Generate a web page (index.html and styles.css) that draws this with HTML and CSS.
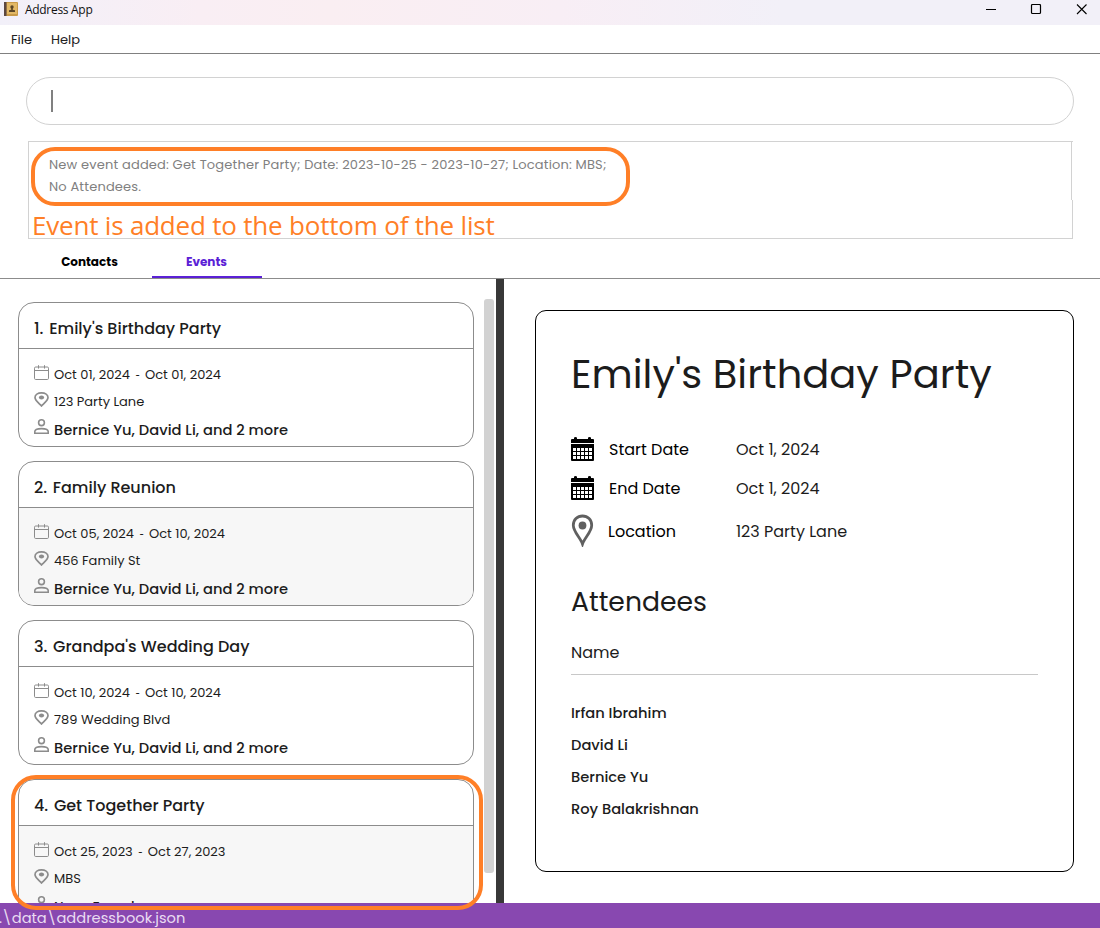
FILE: index.html
```html
<!DOCTYPE html>
<html lang="en">
<head>
<meta charset="utf-8">
<title>Address App</title>
<link rel="stylesheet" href="styles.css">
</head>
<body>
<svg class="defs" width="0" height="0" aria-hidden="true">
  <symbol id="cal" viewBox="0 0 15 15"><path d="M.5 3.2Q.5 2 1.7 2H13.3Q14.5 2 14.5 3.2V13.3Q14.5 14.5 13.3 14.5H1.7Q.5 14.5 .5 13.3ZM.5 5.5H14.5M4.5 .2V3.6M10.5 .2V3.6" fill="none" stroke="#8c8c8c"/></symbol>
  <symbol id="pin" viewBox="0 0 15 15"><path d="M7.5 14C5.5 11.8 1 8.800 1 5.600C1 2.700 3.900 .9 7.500 .9S14 2.700 14 5.600C14 8.800 9.500 11.800 7.500 14Z" fill="none" stroke="#8c8c8c" stroke-width="1.700"/><ellipse cx="7.500" cy="5.400" rx="2.600" ry="2" fill="#8c8c8c"/></symbol>
  <symbol id="person" viewBox="0 0 15 15"><g fill="none" stroke="#8c8c8c" stroke-width="1.600"><circle cx="7.500" cy="3.700" r="2.900"/><path d="M.8 14.200V12.600C.8 10.600 4 9.600 7.500 9.600S14.200 10.600 14.200 12.600V14.200Z"/></g></symbol>
  <symbol id="calsolid" viewBox="0 0 23 24"><path d="M0 3Q0 2 1 2H3V1Q3 0 4.500 0T6 1V2H17V1Q17 0 18.500 0T20 1V2H22Q23 2 23 3V6H0ZM0 7H23V23Q23 24 22 24H1Q0 24 0 23Z"/><path d="M2 11h3v3h-3zM6 11h3v3h-3zM10 11h3v3h-3zM14 11h3v3h-3zM18 11h3v3h-3zM2 15h3v3h-3zM6 15h3v3h-3zM10 15h3v3h-3zM14 15h3v3h-3zM18 15h3v3h-3zM2 19h3v3h-3zM6 19h3v3h-3zM10 19h3v3h-3zM14 19h3v3h-3zM18 19h3v3h-3z" fill="#fff"/></symbol>
</svg>
<div class="window">
  <header class="titlebar">
    <svg class="appicon" width="14" height="14" viewBox="0 0 14 14"><rect width="14" height="14" rx="1" fill="#c99a48"/><rect x="3" y="1" width="10" height="11" fill="#e2b866"/><rect width="2.500" height="14" fill="#5b4740"/><circle cx="8" cy="5" r="1.700" fill="#5a4526"/><path d="M7.200 6h1.600v1.700l2.200.6v1.700H5V8.300l2.200-.6z" fill="#5a4526"/></svg>
    <span class="apptitle">Address App</span>
    <svg class="controls" width="104" height="12" viewBox="0 0 104 12"><path d="M1 5.500H11" stroke="#000"/><rect x="46.500" y=".5" width="9" height="9" rx="1" fill="none" stroke="#000" stroke-width="1.200"/><path d="M92 .5L101.500 10M101.500 .5L92 10" stroke="#000" stroke-width="1.100"/></svg>
  </header>
  <nav class="menu"><span>File</span><span>Help</span></nav>
  <section class="top">
    <div class="command"><i class="caret"></i></div>
    <div class="result">
      <div class="message"><p>New event added: Get Together Party; Date: 2023-10-25 - 2023-10-27; Location: MBS;</p><p>No Attendees.</p></div>
      <p class="note">Event is added to the bottom of the list</p>
      <i class="edge"></i>
    </div>
  </section>
  <div class="tabs"><span class="tab">Contacts</span><span class="tab active">Events</span></div>
  <main class="main">
    <section class="list">
      <div class="cards">
        <article class="card"><h2><span class="num">1. </span>Emily's Birthday Party</h2><div class="body">
          <div class="row"><svg class="ic"><use href="#cal"/></svg><span>Oct 01, 2024<b class="dash">-</b>Oct 01, 2024</span></div>
          <div class="row"><svg class="ic"><use href="#pin"/></svg><span>123 Party Lane</span></div>
          <div class="row people"><svg class="ic"><use href="#person"/></svg><span>Bernice Yu, David Li, and 2 more</span></div></div></article>
        <article class="card alt"><h2><span class="num">2. </span>Family Reunion</h2><div class="body">
          <div class="row"><svg class="ic"><use href="#cal"/></svg><span>Oct 05, 2024<b class="dash">-</b>Oct 10, 2024</span></div>
          <div class="row"><svg class="ic"><use href="#pin"/></svg><span>456 Family St</span></div>
          <div class="row people"><svg class="ic"><use href="#person"/></svg><span>Bernice Yu, David Li, and 2 more</span></div></div></article>
        <article class="card"><h2><span class="num">3. </span>Grandpa's Wedding Day</h2><div class="body">
          <div class="row"><svg class="ic"><use href="#cal"/></svg><span>Oct 10, 2024<b class="dash">-</b>Oct 10, 2024</span></div>
          <div class="row"><svg class="ic"><use href="#pin"/></svg><span>789 Wedding Blvd</span></div>
          <div class="row people"><svg class="ic"><use href="#person"/></svg><span>Bernice Yu, David Li, and 2 more</span></div></div></article>
        <article class="card alt"><h2><span class="num">4. </span>Get Together Party</h2><div class="body">
          <div class="row"><svg class="ic"><use href="#cal"/></svg><span>Oct 25, 2023<b class="dash">-</b>Oct 27, 2023</span></div>
          <div class="row"><svg class="ic"><use href="#pin"/></svg><span>MBS</span></div>
          <div class="row people none"><svg class="ic"><use href="#person"/></svg><span>None Found</span></div></div></article>
      </div>
      <div class="scroll"></div>
    </section>
    <div class="divider"></div>
    <section class="detail">
      <div class="panel">
        <h1>Emily's Birthday Party</h1>
        <div class="facts">
          <svg class="big" width="23" height="24"><use href="#calsolid"/></svg><span class="key">Start Date</span><span>Oct 1, 2024</span>
          <svg class="big" width="23" height="24"><use href="#calsolid"/></svg><span class="key">End Date</span><span>Oct 1, 2024</span>
          <svg class="big" width="23" height="33" viewBox="0 0 23 33"><path d="M11.500 30C9.500 24 2.300 17.800 2.300 11.300C2.300 5.800 6.300 2 11.500 2S20.700 5.800 20.700 11.300C20.700 17.800 13.500 24 11.500 30Z" fill="none" stroke="#606060" stroke-width="2.800"/><circle cx="11.500" cy="11.500" r="3.900" fill="#606060"/></svg><span class="key place">Location</span><span>123 Party Lane</span>
        </div>
        <h3>Attendees</h3>
        <div class="colhead"><span>Name</span></div>
        <ul class="names"><li>Irfan Ibrahim</li><li>David Li</li><li>Bernice Yu</li><li>Roy Balakrishnan</li></ul>
      </div>
    </section>
  </main>
  <footer class="status">.\data\addressbook.json</footer>
  <div class="highlight"></div>
</div>
</body>
</html>
```
FILE: styles.css
```css
* { box-sizing: border-box; }
body, p, h1, h2, h3, ul { margin: 0; padding: 0; }
body { background: #fff; font-family: Poppins, Inter, sans-serif; color: #1c1c1c; }
.defs { position: absolute; }
.window { width: 1100px; height: 928px; display: flex; flex-direction: column; position: relative; overflow: hidden; white-space: nowrap; }
.titlebar { height: 25px; display: flex; align-items: flex-start; padding: 2px 11px 0 4px; background: linear-gradient(90deg, #f2f0f9 0, #f9eef4 200px, #faeef2 330px, #f8eef5 560px, #f2f0f8 780px, #f2f0f8 100%); }
.apptitle { font: 12px/16px "Segoe UI", "Open Sans", sans-serif; color: #111; margin-left: 7px; flex: 1; letter-spacing: -0.3px; }
.controls { margin-top: 2px; }
.menu { height: 29px; border-bottom: 1px solid #808080; padding: 2px 0 0 11px; display: flex; align-items: center; gap: 19px; font-size: 13px; color: #222; }
.top { height: 195px; padding: 23px 26px 0; }
.command { height: 48px; border: 1px solid #d2d2d2; border-radius: 24px; padding: 12px 0 0 24px; }
.caret { display: block; width: 2px; height: 22px; background: #808080; }
.result { position: relative; margin: 16px 1px 0 2px; height: 98px; border: 1px solid #d2d2d2; border-right: 0; padding: 5px 0 0 2px; }
.edge { position: absolute; right: 0; top: 0; width: 2px; height: 96px; background: linear-gradient(#d2d2d2, #d2d2d2) 0 0 / 1px 58px no-repeat, linear-gradient(#d2d2d2, #d2d2d2) 1px 58px / 1px 38px no-repeat; }
.message { width: 599px; height: 59px; border: 4px solid #ff7f27; border-radius: 24px; padding: 3px 0 0 14px; font-size: 13px; line-height: 22px; letter-spacing: 0.170px; color: #808080; }
.note { font: 26px/38px "Segoe UI", "Open Sans", sans-serif; color: #ff7f27; margin-left: 1px; letter-spacing: -0.2px; }
.tabs { height: 30px; border-bottom: 1px solid #8c8c8c; display: flex; padding-left: 27px; font-size: 12px; font-weight: 700; color: #000; }
.tab { width: 125px; text-align: center; line-height: 26px; }
.tab.active { width: 110px; padding-right: 1px; color: #5b21d6; border-bottom: 2px solid #5b21d6; }
.main { height: 624px; display: flex; overflow: hidden; }
.list { width: 496px; display: flex; padding-left: 18px; }
.cards { width: 456px; padding-top: 23px; display: flex; flex-direction: column; gap: 14px; }
.card { height: 145px; flex: none; border: 1px solid #8c8c8c; border-radius: 16px; overflow: hidden; }
.card h2 { height: 46px; border-bottom: 1px solid #8c8c8c; padding: 3px 0 0 15px; font-size: 16px; font-weight: 500; line-height: 45px; }
.num { margin-right: 1.500px; }
.body { height: 97px; padding: 12px 0 0 15px; display: grid; grid-template-rows: 27px 27px 30px; font-size: 13px; }
.alt .body { background: #f7f7f7; }
.row { display: flex; align-items: center; gap: 5px; }
.dash { display: inline-block; width: 15px; text-align: center; font: 13px/16px "Segoe UI", "Open Sans", sans-serif; }
.ic { width: 15px; height: 15px; flex: none; margin-bottom: 4px; }
.people { font-size: 14.670px; font-weight: 500; letter-spacing: 0.03px; }
.people .ic { margin-bottom: 7px; }
.none { font-size: 13.330px; }
.none span { margin-top: 2px; }
.scroll { width: 10px; height: 574px; margin: 20px 0 0 10px; border-radius: 3px; background: #d2d2d2; }
.divider { width: 8px; background: #383838; }
.detail { flex: 1; padding: 31px 26px 0 31px; }
.panel { height: 562px; border: 1px solid #000; border-radius: 11px; padding: 33px 35px 0; }
h1 { font-size: 40px; font-weight: 400; line-height: 60px; }
.facts { margin-top: 26px; display: grid; grid-template-columns: 38px 127px 1fr; grid-template-rows: 39px 39px 46px; align-items: center; font-size: 16px; }
.big { margin-bottom: 2px; }
.key { color: #000; }
.place { margin-left: -1px; }
h3 { margin-top: 24px; font-size: 26.670px; font-weight: 400; line-height: 48px; }
.colhead { height: 49px; border-bottom: 1px solid #c8c8c8; line-height: 53px; font-size: 16px; }
.names { list-style: none; padding-top: 22px; font-size: 14.670px; font-weight: 500; line-height: 32px; }
.status { height: 25px; background: #8848b0; color: #eadcf2; font-size: 14.670px; line-height: 30px; text-indent: -1px; }
.highlight { position: absolute; left: 11px; top: 775px; width: 472px; height: 135px; border: 4px solid #ff7f27; border-radius: 25px; }
```
